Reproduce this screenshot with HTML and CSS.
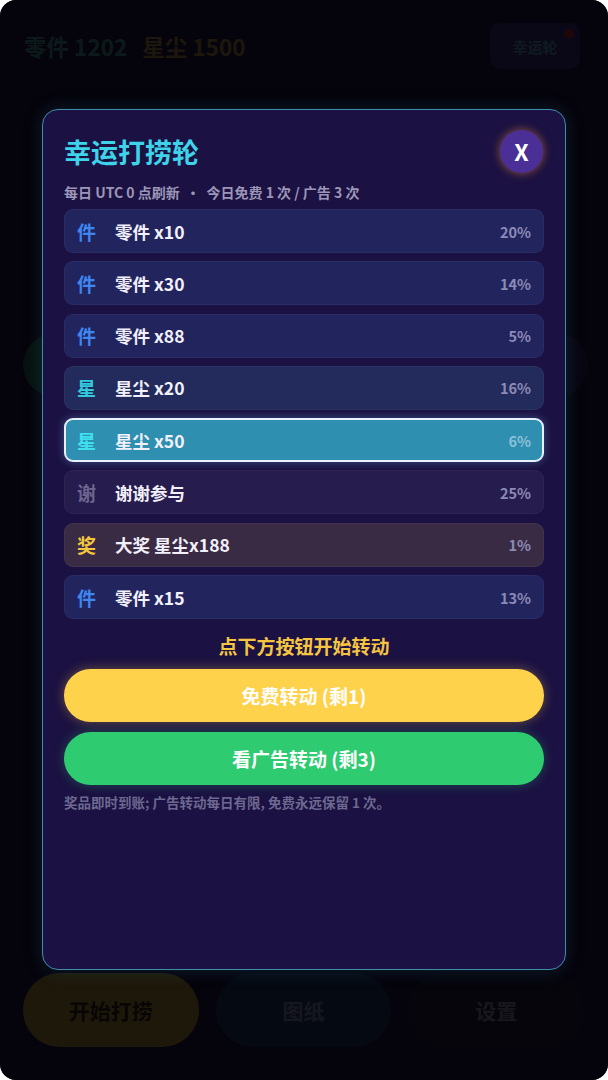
FILE: index.html
```html
<!DOCTYPE html>
<html lang="zh-CN">
<head>
<meta charset="utf-8">
<title>幸运打捞轮</title>
<link rel="stylesheet" href="styles.css">
</head>
<body>
<div class="app">
  <header class="topbar">
    <div class="stats">
      <span class="stat stat-parts">零件 1202</span>
      <span class="stat stat-dust">星尘 1500</span>
    </div>
    <button class="wheel-btn">幸运轮<span class="dot"></span></button>
  </header>
  <main class="stage">
    <div class="side-row">
      <div class="side-btn side-green">自</div>
      <div class="side-btn side-blue">加</div>
    </div>
  </main>
  <nav class="bottom-nav">
    <button class="nav-btn nav-yellow">开始打捞</button>
    <button class="nav-btn nav-blue">图纸</button>
    <button class="nav-btn nav-dark">设置</button>
  </nav>

  <div class="overlay">
    <section class="modal">
      <div class="modal-head">
        <h1 class="modal-title">幸运打捞轮</h1>
        <button class="close-btn">X</button>
      </div>
      <p class="modal-sub">每日 UTC 0 点刷新 &nbsp;·&nbsp; 今日免费 1 次 / 广告 3 次</p>
      <ul class="prize-list">
        <li class="prize prize-part"><span class="ico">件</span><span class="name">零件 x10</span><span class="pct">20%</span></li>
        <li class="prize prize-part"><span class="ico">件</span><span class="name">零件 x30</span><span class="pct">14%</span></li>
        <li class="prize prize-part"><span class="ico">件</span><span class="name">零件 x88</span><span class="pct">5%</span></li>
        <li class="prize prize-dust"><span class="ico">星</span><span class="name">星尘 x20</span><span class="pct">16%</span></li>
        <li class="prize prize-dust active"><span class="ico">星</span><span class="name">星尘 x50</span><span class="pct">6%</span></li>
        <li class="prize prize-thanks"><span class="ico">谢</span><span class="name">谢谢参与</span><span class="pct">25%</span></li>
        <li class="prize prize-jackpot"><span class="ico">奖</span><span class="name">大奖 星尘x188</span><span class="pct">1%</span></li>
        <li class="prize prize-part"><span class="ico">件</span><span class="name">零件 x15</span><span class="pct">13%</span></li>
      </ul>
      <p class="hint">点下方按钮开始转动</p>
      <button class="spin-btn spin-free">免费转动 (剩1)</button>
      <button class="spin-btn spin-ad">看广告转动 (剩3)</button>
      <p class="foot">奖品即时到账; 广告转动每日有限, 免费永远保留 1 次。</p>
    </section>
  </div>
</div>
</body>
</html>
```

FILE: styles.css
```css
* { box-sizing: border-box; margin: 0; padding: 0; }

html, body {
  width: 608px;
  height: 1080px;
  background: #ffffff;
}

body {
  font-family: "Noto Sans CJK SC", "Noto Sans", sans-serif;
  font-weight: 700;
}

button {
  font-family: inherit;
  font-weight: 700;
  border: none;
  cursor: pointer;
}

.app {
  position: relative;
  width: 608px;
  height: 1080px;
  border-radius: 16px;
  overflow: hidden;
  background: #1e1838;
  display: flex;
  flex-direction: column;
}

/* ---------- background page ---------- */
.topbar {
  display: flex;
  align-items: center;
  justify-content: space-between;
  padding: 20px 24px 0 24px;
  height: 72px;
}

.stats {
  display: flex;
  gap: 15px;
  font-size: 22.5px;
}

.stat-parts { color: #5fd6c8; }
.stat-dust { color: #f0c040; }

.wheel-btn {
  position: relative;
  width: 90px;
  height: 46px;
  border-radius: 10px;
  background: #4a3c9a;
  color: #6fe0f0;
  font-size: 15px;
  margin-right: 4px;
}

.dot {
  position: absolute;
  top: 6px;
  right: 6px;
  width: 10px;
  height: 10px;
  border-radius: 50%;
  background: #ff3b3b;
}

.stage {
  flex: 1;
  padding-top: 262px;
}

.side-row {
  display: flex;
  justify-content: space-between;
  padding: 0 20px 0 23px;
}

.side-btn {
  width: 62px;
  height: 62px;
  border-radius: 50%;
  display: flex;
  align-items: center;
  justify-content: center;
  font-size: 16px;
  color: #ffffff;
}

.side-green { background: #2e9b5a; }
.side-blue { background: #3a3470; }

.bottom-nav {
  display: flex;
  gap: 17px;
  padding: 0 24px 33px 23px;
}

.nav-btn {
  flex: 1;
  height: 74px;
  border-radius: 37px;
  font-size: 21px;
}

.nav-yellow { background: #ffcc33; color: #3a2800; }
.nav-blue { background: #1e4a7a; color: #b8c8e0; }
.nav-dark { background: #2a2440; color: #c0bcd8; }

/* ---------- overlay & modal ---------- */
.overlay {
  position: absolute;
  inset: 0;
  background: rgba(2, 1, 6, 0.89);
  display: flex;
  align-items: center;
  justify-content: center;
}

.modal {
  width: 524px;
  height: 861px;
  margin-top: -1px;
  background: #1b1142;
  border: 1.5px solid #3f8ea8;
  border-radius: 16px;
  padding: 19px 21px 0 21px;
  display: flex;
  flex-direction: column;
  box-shadow: 0 0 18px rgba(40, 120, 160, 0.25);
}

.modal-head {
  display: flex;
  align-items: center;
  justify-content: space-between;
  height: 44px;
}

.modal-title {
  font-size: 27px;
  line-height: 1;
  color: #3ed3e8;
  font-weight: 700;
  margin-top: 1px;
}

.close-btn {
  width: 43px;
  height: 43px;
  border-radius: 50%;
  background: #4a2f96;
  color: #ffffff;
  font-size: 23px;
  box-shadow: 0 0 10px rgba(230, 130, 60, 0.6);
  margin-right: 1px;
}

.modal-sub {
  margin-top: 10px;
  font-size: 14px;
  line-height: 18px;
  color: #9b96b8;
}

.prize-list {
  list-style: none;
  margin-top: 8px;
  display: flex;
  flex-direction: column;
  gap: 8.3px;
}

.prize {
  height: 44px;
  border-radius: 9px;
  display: flex;
  align-items: center;
  padding: 0 12px 0 12px;
  border: 1px solid rgba(255, 255, 255, 0.04);
}

.ico {
  width: 38px;
  font-size: 19px;
}

.name {
  flex: 1;
  font-size: 17.5px;
  color: #f2f0fa;
}

.pct {
  font-size: 14.5px;
  color: #8d8ab6;
}

.prize-part { background: #22245e; }
.prize-part .ico { color: #3f86f0; }

.prize-dust { background: #232b5c; }
.prize-dust .ico { color: #32c9df; }

.prize-thanks { background: #261c4e; }
.prize-thanks .ico { color: #6c6690; }

.prize-jackpot { background: #3a2b44; }
.prize-jackpot .ico { color: #f4c63e; }

.prize.active {
  background: #2f8fb0;
  border: 2px solid #e8f0ff;
  box-shadow: 0 0 10px rgba(120, 200, 255, 0.35);
  padding: 0 11px;
}

.prize.active .ico { color: #3ee0ee; }
.prize.active .pct { color: #8cc0d8; }

.hint {
  margin-top: 14px;
  text-align: center;
  font-size: 19px;
  line-height: 26px;
  color: #f5c542;
}

.spin-btn {
  margin-top: 10px;
  height: 53px;
  border-radius: 27px;
  color: #ffffff;
  font-size: 19px;
  width: 100%;
}

.spin-free {
  background: #ffd24c;
  box-shadow: 0 0 12px rgba(255, 200, 70, 0.35);
}

.spin-ad {
  margin-top: 10px;
  background: #2ecb70;
  box-shadow: 0 0 12px rgba(50, 210, 120, 0.3);
}

.foot {
  margin-top: 8px;
  font-size: 13.5px;
  line-height: 19px;
  color: #6c6890;
}
```
